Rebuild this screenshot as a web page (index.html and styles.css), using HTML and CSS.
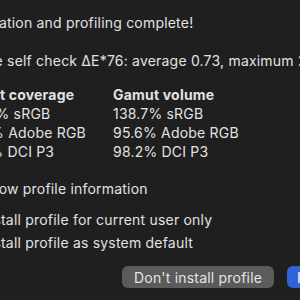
FILE: index.html
```html
<!DOCTYPE html>
<html>
<head>
<meta charset="utf-8">
<link rel="stylesheet" href="styles.css">
</head>
<body>
<div class="dialog">
  <p class="line title">Calibration and profiling complete!</p>
  <p class="line check">Profile self check ΔE*76: average 0.73, maximum 2.41, RMS 0.86</p>
  <div class="gamut">
    <div class="head">Gamut coverage</div>
    <div class="head">Gamut volume</div>
    <div>100.0% sRGB</div>
    <div>138.7% sRGB</div>
    <div>92.4% Adobe RGB</div>
    <div>95.6% Adobe RGB</div>
    <div>96.9% DCI P3</div>
    <div>98.2% DCI P3</div>
  </div>
  <label class="option show"><span class="box"></span>Show profile information</label>
  <label class="option radio1"><span class="box round"></span>Install profile for current user only</label>
  <label class="option radio2"><span class="box round"></span>Install profile as system default</label>
  <div class="buttons">
    <button class="btn">Don't install profile</button>
    <button class="btn primary">Install profile</button>
  </div>
</div>
</body>
</html>
```
FILE: styles.css
```css
html, body {
  margin: 0;
  padding: 0;
  background: #1f1f1f;
  overflow: hidden;
}
body {
  width: 300px;
  height: 300px;
  font-family: Inter, "Noto Sans", sans-serif;
  font-size: 14px;
  letter-spacing: 0.2px;
  color: #e2e2e2;
}
.dialog {
  margin-left: -41px;
  width: 560px;
  padding-top: 13px;
}
.line {
  margin: 0;
  line-height: 19px;
  white-space: nowrap;
}
.check {
  margin-top: 19px;
}
.gamut {
  margin-top: 15px;
  display: grid;
  grid-template-columns: 154px auto;
  line-height: 19px;
  white-space: nowrap;
}
.head {
  font-weight: 700;
}
.option {
  display: flex;
  align-items: center;
  line-height: 19px;
  white-space: nowrap;
}
.box {
  width: 14px;
  height: 14px;
  border-radius: 3px;
  background: #3a3a3a;
  margin-right: 8px;
}
.box.round {
  border-radius: 50%;
}
.show {
  margin-top: 18px;
}
.radio1 {
  margin-top: 12px;
}
.radio2 {
  margin-top: 4px;
}
.buttons {
  margin-top: 14px;
  padding-left: 163px;
  display: flex;
  gap: 13px;
}
.btn {
  height: 22px;
  padding: 0 12px;
  border: none;
  border-radius: 6px;
  background: #5b5b5b;
  color: #e4e4e4;
  font-family: Inter, "Noto Sans", sans-serif;
  font-size: 14px;
  letter-spacing: 0.2px;
  white-space: nowrap;
}
.btn.primary {
  padding-left: 10px;
  background: #2f63d8;
  color: #ffffff;
}
```
